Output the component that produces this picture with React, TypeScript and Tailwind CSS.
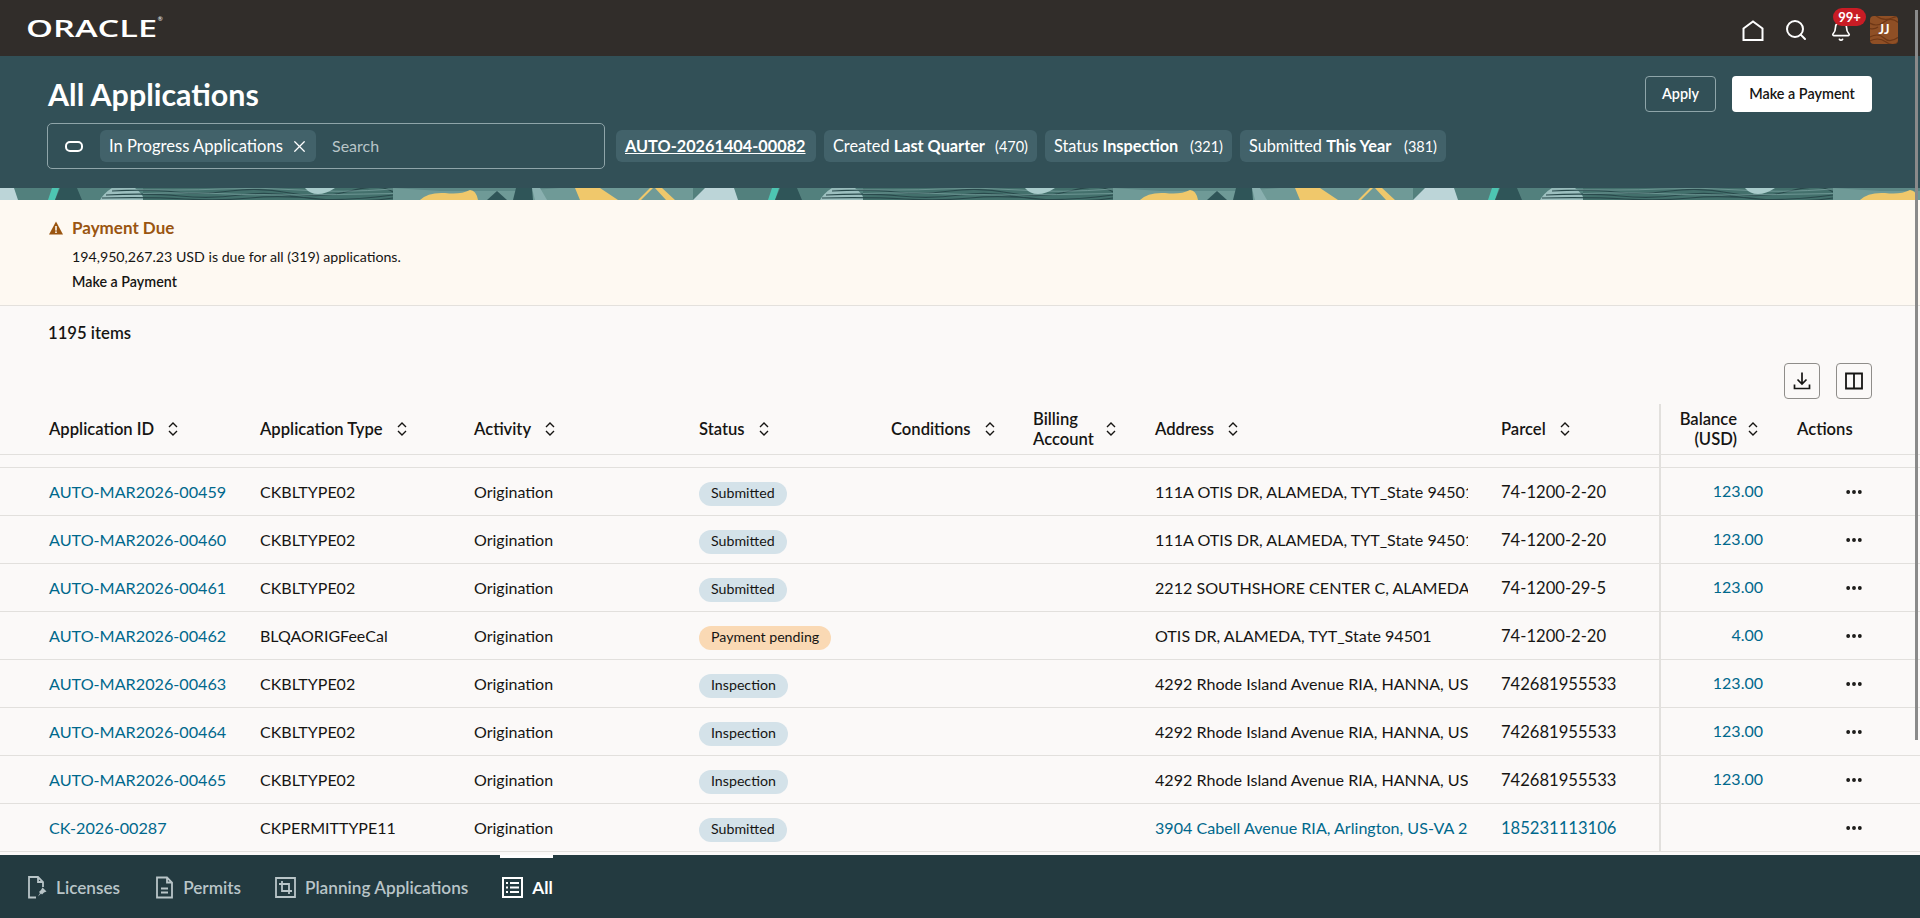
import { Search, Bell, X, Ellipsis } from 'lucide-react';

const gridCols = 'grid grid-cols-[49px_211px_214px_225px_192px_142px_122px_346px_158px_112px_1fr]';

type Row = {
  id: string;
  type: string;
  status: string;
  address: string;
  parcel: string;
  balance: string;
  linked?: boolean;
};

const rows: Row[] = [
  { id: 'AUTO-MAR2026-00459', type: 'CKBLTYPE02', status: 'Submitted', address: '111A OTIS DR, ALAMEDA, TYT_State 94501', parcel: '74-1200-2-20', balance: '123.00' },
  { id: 'AUTO-MAR2026-00460', type: 'CKBLTYPE02', status: 'Submitted', address: '111A OTIS DR, ALAMEDA, TYT_State 94501', parcel: '74-1200-2-20', balance: '123.00' },
  { id: 'AUTO-MAR2026-00461', type: 'CKBLTYPE02', status: 'Submitted', address: '2212 SOUTHSHORE CENTER C, ALAMEDA, TYT_State 94501', parcel: '74-1200-29-5', balance: '123.00' },
  { id: 'AUTO-MAR2026-00462', type: 'BLQAORIGFeeCal', status: 'Payment pending', address: 'OTIS DR, ALAMEDA, TYT_State 94501', parcel: '74-1200-2-20', balance: '4.00' },
  { id: 'AUTO-MAR2026-00463', type: 'CKBLTYPE02', status: 'Inspection', address: '4292 Rhode Island Avenue RIA, HANNA, US-WY 82327', parcel: '742681955533', balance: '123.00' },
  { id: 'AUTO-MAR2026-00464', type: 'CKBLTYPE02', status: 'Inspection', address: '4292 Rhode Island Avenue RIA, HANNA, US-WY 82327', parcel: '742681955533', balance: '123.00' },
  { id: 'AUTO-MAR2026-00465', type: 'CKBLTYPE02', status: 'Inspection', address: '4292 Rhode Island Avenue RIA, HANNA, US-WY 82327', parcel: '742681955533', balance: '123.00' },
  { id: 'CK-2026-00287', type: 'CKPERMITTYPE11', status: 'Submitted', address: '3904 Cabell Avenue RIA, Arlington, US-VA 22203', parcel: '185231113106', balance: '', linked: true },
];

function SortIcon() {
  return (
    <svg width="10" height="14" viewBox="0 0 10 14" fill="none" stroke="#161513" strokeWidth="1.4" className="shrink-0">
      <path d="M1 5l4-4 4 4M1 9l4 4 4-4" />
    </svg>
  );
}

function Pattern() {
  return (
    <svg className="block w-full h-3 shrink-0" aria-hidden="true">
      <defs>
        <pattern id="band" width="720" height="12" patternUnits="userSpaceOnUse">
          <rect width="720" height="12" fill="#52807d" />
          <path d="M-15 0H14L18 12H-27Z" fill="#bcd5d8" />
          <path d="M52 0H59L55 12H48Z" fill="#4dc5b2" />
          <path d="M60 0H77L82 12H55Z" fill="#2f5558" />
          <path d="M112 0H135Q143 6 144 12H100Q104 5 112 0Z" fill="#9cbfbf" />
          <rect x="143" width="250" height="12" fill="#43706c" />
          <path d="M112 3Q150 1 175 4T230 3T290 5T350 3T393 4M106 7Q150 5 180 8T240 7T300 9T393 7M102 10Q150 9 185 11T250 10T320 11T393 10" fill="none" stroke="#28494b" strokeWidth="1.2" />
          <path d="M112 1Q180 3 220 1T300 2T393 1M143 5.5Q190 4 230 6T393 5.5" fill="none" stroke="#7ea5a3" strokeWidth="0.7" />
          <path d="M305 0H335Q326 6 318 6Q310 6 305 0Z" fill="#a9cccc" />
          <rect x="393" width="300" height="12" fill="#6f9a97" />
          <path d="M393 0H560L520 3H440Z" fill="#5d8987" />
          <path d="M420 12Q428 4 445 5Q460 7 470 2Q476 2 478 12Z" fill="#f0c86b" />
          <path d="M497 3L507 12H487Z" fill="#2f5558" />
          <path d="M516 0H532L533 12H513Z" fill="#2f5558" />
          <path d="M532 0H540L547 12H535Z" fill="#8ab0b0" />
          <path d="M575 0H600L618 12H580Z" fill="#f0c86b" />
          <path d="M650 0H653L641 12H638ZM655 0H662L675 12H666Z" fill="#f0c86b" />
          <path d="M705 0H720V12H693Z" fill="#bcd5d8" />
        </pattern>
      </defs>
      <rect width="100%" height="12" fill="url(#band)" />
    </svg>
  );
}

function Chip({ className, children }: { className: string; children: React.ReactNode }) {
  return <div className={`h-8 px-[9px] flex items-center rounded-md bg-[#42626a] text-white text-[16.3px] whitespace-nowrap ${className}`}>{children}</div>;
}

function StatusBadge({ status }: { status: string }) {
  const color = status === 'Payment pending' ? 'bg-[#fad9b4]' : 'bg-[#d4e2e9]';
  return <span className={`h-6 px-3 pb-px inline-flex items-center rounded-full text-[14.2px] whitespace-nowrap ${color}`}>{status}</span>;
}

function HeaderCell({ children }: { children: React.ReactNode }) {
  return (
    <div className="flex items-center gap-[14px] font-semibold leading-5 text-[16.6px]">
      <span>{children}</span>
      <SortIcon />
    </div>
  );
}

function FooterTab({ icon, label, active }: { icon: React.ReactNode; label: string; active?: boolean }) {
  return (
    <div className={`relative h-full pt-[2px] flex items-center gap-[9px] ${active ? 'text-white font-bold' : 'text-[#b9c5c8] font-semibold'}`}>
      {active && <span className="absolute top-0 -left-[2px] right-0 h-[3px] bg-white" />}
      {icon}
      <span>{label}</span>
    </div>
  );
}

export default function App() {
  return (
    <div className="relative h-[918px] w-full overflow-hidden flex flex-col bg-[#fbf9f8] text-[#161513] text-[16px] [font-family:Lato,'Noto_Sans',sans-serif]">
      <header className="h-14 shrink-0 bg-[#312d2a] flex items-center">
        <span className="ml-[26px] text-white text-[24px] leading-none origin-left scale-x-[1.43] [font-family:'Open_Sans',sans-serif] font-semibold">ORACLE</span>
        <sup className="ml-[40px] -mt-3 text-[6px] text-white">®</sup>
        <div className="ml-auto relative h-full w-[156px]">
          <svg width="22" height="21" viewBox="0 0 22 21" fill="none" stroke="#fff" strokeWidth="2" className="absolute left-0 top-5">
            <path d="M1.5 8.5L11 1.5l9.5 7V20h-19z" />
          </svg>
          <Search size={24} color="#fff" strokeWidth={2} className="absolute left-[42px] top-[18px]" />
          <Bell size={22} color="#fff" strokeWidth={1.8} className="absolute left-[88px] top-5" />
          <span className="absolute left-[91px] top-2 h-[18px] w-[33px] rounded-full bg-[#c91c25] text-white text-[13px] font-bold leading-[18px] text-center">99+</span>
          <div className="absolute left-[128px] top-4 h-7 w-7 rounded-[4px] overflow-hidden bg-[#8f4f25] flex items-center justify-center">
            <svg className="absolute inset-0" width="28" height="28" viewBox="0 0 28 28" fill="none" stroke="#6e3716" strokeWidth="1.2">
              <path d="M-2 22Q8 16 14 22T30 20M-2 26Q8 20 16 26T30 24M-2 6Q6 12 14 6T30 8M4 -2Q12 6 22 2T30 2M-2 12Q4 14 8 11" />
            </svg>
            <span className="relative text-white text-[13px] font-bold">JJ</span>
          </div>
        </div>
        <div className="w-[22px]" />
      </header>

      <section className="h-[132px] shrink-0 bg-[#325057] px-12 text-white">
        <div className="pt-5 flex items-center justify-between">
          <h1 className="h-9 text-[30.4px] font-bold leading-9">All Applications</h1>
          <div className="flex gap-4">
            <button className="h-9 w-[71px] rounded-[4px] border border-[#8fa5a9] text-[14.4px] font-semibold">Apply</button>
            <button className="h-9 w-[140px] rounded-[4px] bg-white text-[#161513] text-[14.4px] font-semibold">Make a Payment</button>
          </div>
        </div>
        <div className="mt-[11px] flex items-center">
          <div className="h-[46px] w-[558px] -ml-[1px] rounded-[5px] border border-[#8fa5a9] flex items-center">
            <span className="ml-[17px] h-[11px] w-[18px] rounded-[5px] border-2 border-white" />
            <div className="ml-[17px] h-8 w-[216px] rounded-md bg-[#42626a] flex items-center pl-[9px] pt-px whitespace-nowrap text-[16.6px]">
              <span>In Progress Applications</span>
              <X size={19} strokeWidth={1.6} className="ml-auto mr-[7px]" />
            </div>
            <span className="ml-4 text-[#b9c5c8]">Search</span>
          </div>
          <div className="ml-[11px] flex gap-2">
            <Chip className="w-[200px] pt-px"><span className="font-bold underline">AUTO-20261404-00082</span></Chip>
            <Chip className="w-[213px] pt-px justify-between"><span>Created <b>Last Quarter</b></span><span className="text-[14.5px]">(470)</span></Chip>
            <Chip className="w-[187px] pt-px justify-between"><span>Status <b>Inspection</b></span><span className="text-[14.5px]">(321)</span></Chip>
            <Chip className="w-[206px] pt-px justify-between"><span>Submitted <b>This Year</b></span><span className="text-[14.5px]">(381)</span></Chip>
          </div>
        </div>
      </section>

      <Pattern />

      <section className="h-[106px] shrink-0 bg-[#fef9f2] border-b border-[#e4e1dd] pl-[49px] pt-[18px]">
        <div className="flex items-center h-5 text-[#9a5510] font-bold text-[17px]">
          <svg width="14" height="14" viewBox="0 0 14 14" className="shrink-0">
            <path d="M7 0.5L14 13.5H0Z" fill="#9a5510" />
            <rect x="6.2" y="5" width="1.6" height="4.6" fill="#fef9f2" />
            <rect x="6.2" y="10.4" width="1.6" height="1.6" fill="#fef9f2" />
          </svg>
          <span className="ml-[9px]">Payment Due</span>
        </div>
        <p className="ml-[23px] mt-[9px] h-5 text-[14.2px] leading-5">194,950,267.23 USD is due for all (319) applications.</p>
        <p className="ml-[23px] mt-[5px] h-5 text-[14.3px] leading-5 font-semibold">Make a Payment</p>
      </section>

      <main className="relative flex-1 min-h-0 overflow-hidden">
        <div className="h-[57px] pl-12 flex items-center font-semibold pb-px text-[16.7px]">1195 items</div>
        <div className="h-9 flex justify-end gap-4 pr-12">
          <button className="h-9 w-9 rounded-[4px] border border-[#8f8d8a] flex items-center justify-center">
            <svg width="20" height="20" viewBox="0 0 20 20" fill="none" stroke="#161513" strokeWidth="1.7">
              <path d="M10 1.5v11M5.5 8.5l4.5 4.5 4.5-4.5M2.5 13.5v4h15v-4" />
            </svg>
          </button>
          <button className="h-9 w-9 rounded-[4px] border border-[#8f8d8a] flex items-center justify-center">
            <svg width="20" height="20" viewBox="0 0 20 20" fill="none" stroke="#161513" strokeWidth="1.8">
              <path d="M2 2.5h16v15H2zM10 2.5v15" />
            </svg>
          </button>
        </div>

        <div className={`${gridCols} mt-[5px] h-[51px] items-center border-b border-[#e2e0dd]`}>
          <div />
          <HeaderCell>Application ID</HeaderCell>
          <HeaderCell>Application Type</HeaderCell>
          <HeaderCell>Activity</HeaderCell>
          <HeaderCell>Status</HeaderCell>
          <HeaderCell>Conditions</HeaderCell>
          <div className="flex items-center gap-[12px] font-semibold leading-5 text-[16.6px]">
            <span>Billing<br />Account</span>
            <SortIcon />
          </div>
          <HeaderCell>Address</HeaderCell>
          <HeaderCell>Parcel</HeaderCell>
          <div className="h-full border-l-2 border-[#e2e0dd] pr-[13px] flex items-center justify-end gap-[11px] font-semibold leading-5 text-[16.6px]">
            <span className="text-right">Balance<br />(USD)</span>
            <SortIcon />
          </div>
          <div className="pl-[26px] font-semibold text-[16.6px]">Actions</div>
        </div>
        <div className={`${gridCols} h-3`}>
          <div className="col-start-10 border-l-2 border-[#e2e0dd]" />
        </div>

        {rows.map((row) => (
          <div key={row.id} className={`${gridCols} h-12 items-center pb-[2px] border-t border-[#e2e0dd]`}>
            <div />
            <a className="text-[#00688c] whitespace-nowrap text-[16.2px]">{row.id}</a>
            <div>{row.type}</div>
            <div>Origination</div>
            <div className="mt-[2px]"><StatusBadge status={row.status} /></div>
            <div />
            <div />
            <div className={`w-[313px] overflow-hidden whitespace-nowrap text-[16.1px] ${row.linked ? 'text-[#00688c]' : ''}`}>{row.address}</div>
            <div className={`text-[16.6px] ${row.linked ? 'text-[#00688c]' : ''}`}>{row.parcel}</div>
            <div className="self-start h-12 pb-[2px] border-l-2 border-[#e2e0dd] pr-2 flex items-center justify-end text-[#00688c]">{row.balance}</div>
            <div className="pl-[73px]"><Ellipsis size={20} strokeWidth={2.6} /></div>
          </div>
        ))}
        <div className="border-t border-[#e2e0dd]" />
      </main>

      <footer className="h-[63px] shrink-0 bg-[#233a40] flex items-center pl-[28px] text-[17.2px]">
        <div className="h-full mr-[35px]">
          <FooterTab label="Licenses" icon={
            <svg width="19" height="23" viewBox="0 0 19 23" fill="none" stroke="#b9c5c8" strokeWidth="1.8">
              <path d="M8 21.5H1V1h9l5 5v5M10 1v5h5" />
              <path d="M14.5 11.5l4 4-2.5 1-2 2-1-1-3 3 2-3.5-1-1 2-2z" fill="#b9c5c8" stroke="none" />
            </svg>
          } />
        </div>
        <div className="h-full mr-[34px]">
          <FooterTab label="Permits" icon={
            <svg width="19" height="23" viewBox="0 0 19 23" fill="none" stroke="#b9c5c8" strokeWidth="1.8">
              <path d="M2 1.5h10l5 5v15H2zM12 1.5v5h5M6 12.5h7M6 16.5h7" />
            </svg>
          } />
        </div>
        <div className="h-full mr-[34px]">
          <FooterTab label="Planning Applications" icon={
            <svg width="21" height="21" viewBox="0 0 21 21" fill="none" stroke="#b9c5c8" strokeWidth="1.8">
              <path d="M1 1h19v19H1zM7 4v10h10M4 7h10v10" />
            </svg>
          } />
        </div>
        <div className="h-full">
          <FooterTab active label="All" icon={
            <svg width="21" height="21" viewBox="0 0 21 21" fill="none" stroke="#fff" strokeWidth="2">
              <path d="M1 1h19v19H1zM4 6h2M8 6h9M4 10.5h2M8 10.5h9M4 15h2M8 15h9" />
            </svg>
          } />
        </div>
      </footer>

      <div className="absolute top-[10px] right-[2px] h-[730px] w-[3px] bg-[#8a8a8a]" />
    </div>
  );
}
